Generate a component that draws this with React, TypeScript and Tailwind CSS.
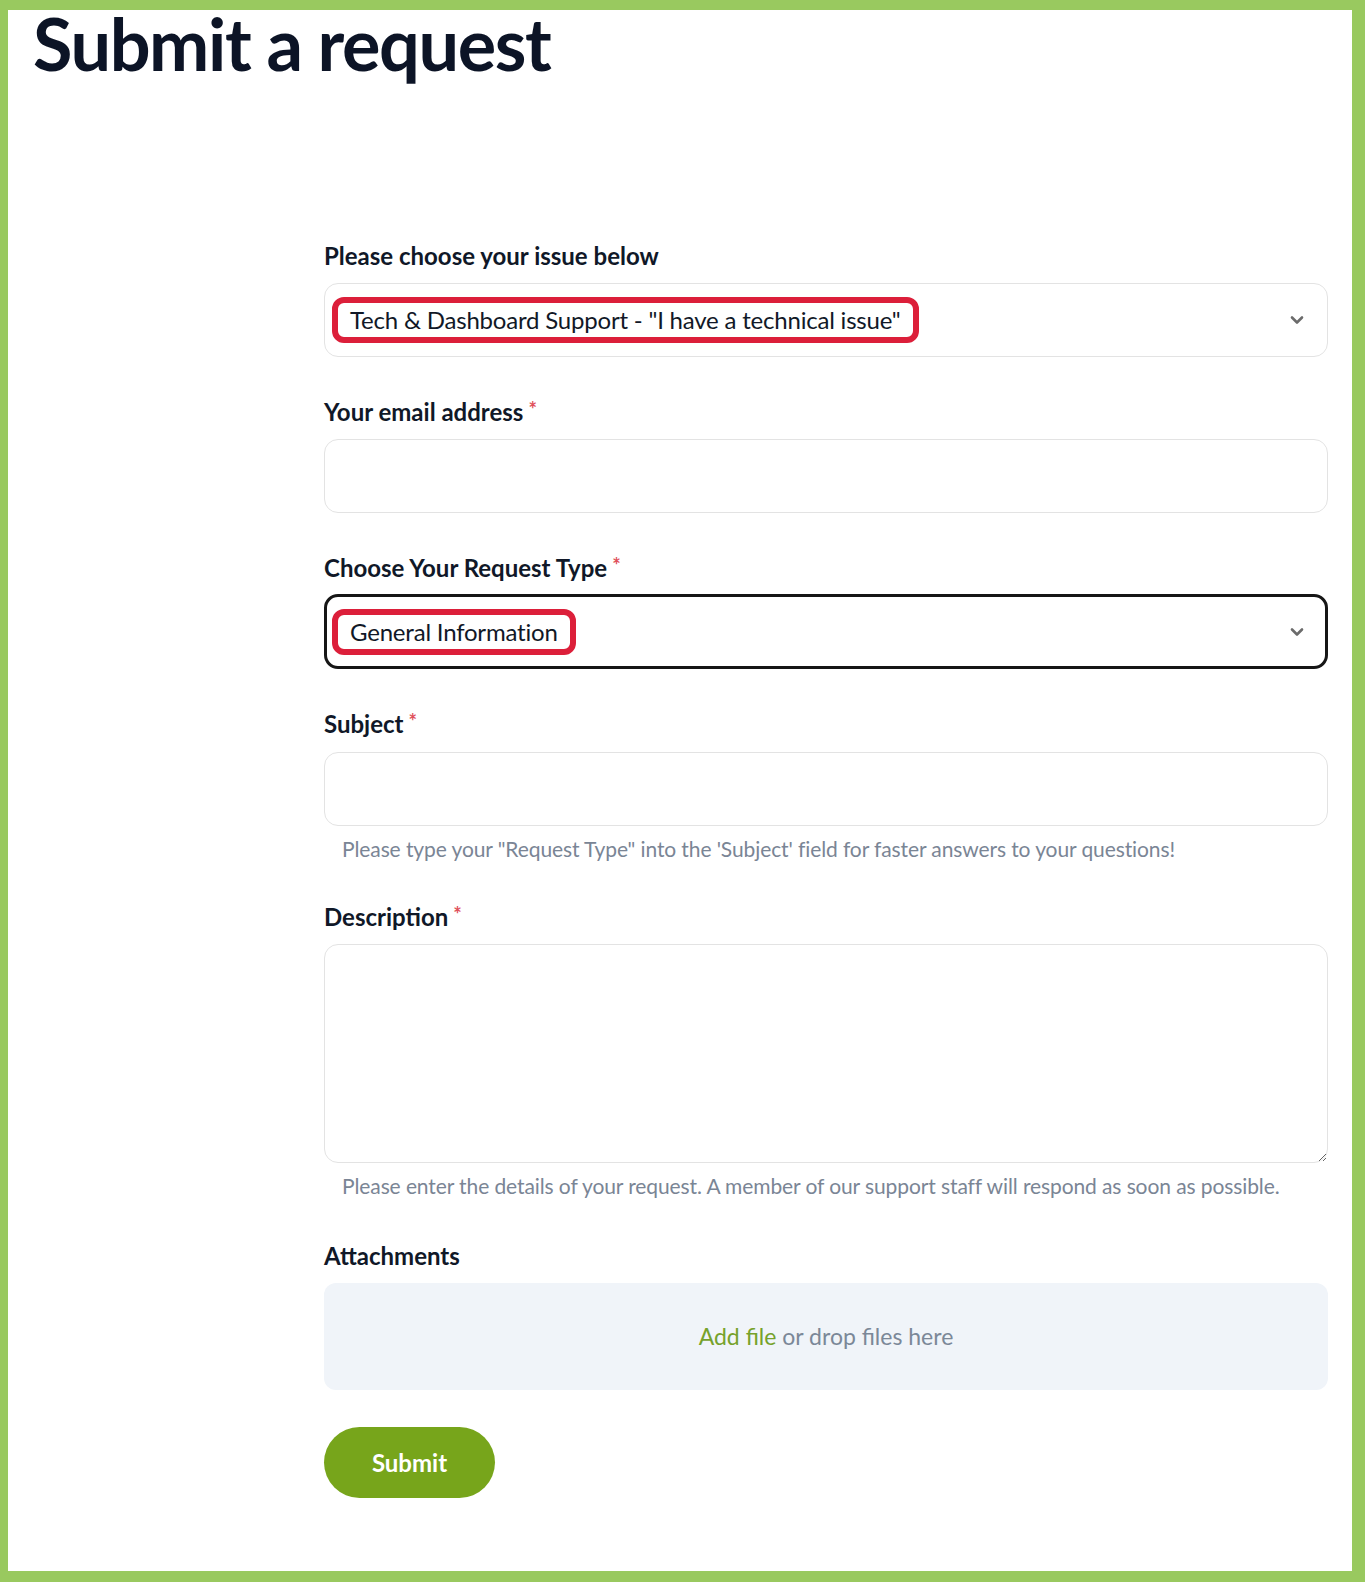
import React from 'react';

const LATO = "font-['Lato','Liberation_Sans',sans-serif]";

function Asterisk() {
  return <span className="relative top-[1px] ml-[5px] align-top text-[20px] leading-none text-[#e0505a]">*</span>;
}

function Label({ children, required = false }: { children: React.ReactNode; required?: boolean }) {
  return (
    <label className="block text-[24px] font-bold leading-[28px] text-[#101828]">
      {children}
      {required ? <Asterisk /> : null}
    </label>
  );
}

function Chevron() {
  return (
    <svg width="14" height="10" viewBox="0 0 14 10" className="shrink-0" aria-hidden="true">
      <path d="M2 2.5 L7 7.5 L12 2.5" fill="none" stroke="#6b6b6b" strokeWidth="2.6" strokeLinecap="round" strokeLinejoin="round" />
    </svg>
  );
}

/** The red annotation box drawn round the selected value. */
function Marked({ children }: { children: React.ReactNode }) {
  return (
    <span className="inline-block rounded-[12px] border-[6px] border-[#dc1f3a] bg-white px-[12px] text-[24px] leading-[34px] tracking-[-0.2px] text-[#111827]">
      {children}
    </span>
  );
}

function Help({ children }: { children: React.ReactNode }) {
  return <p className="mt-[9px] pl-[18px] text-[21px] leading-[28px] tracking-[-0.1px] text-[#7a8595]">{children}</p>;
}

export default function App() {
  return (
    <div className={`${LATO} min-h-[1582px] w-full bg-[#99c95f] pb-[11px] pl-[8px] pr-[13px] pt-[10px]`}>
      <div className="h-[1561px] bg-white">
        <h1 className="ml-[25px] pt-[5px] text-[72px] font-bold leading-[56px] tracking-[-1.4px] text-[#0c1426]">
          Submit a request
        </h1>

        <form className="ml-[316px] mr-[24px] mt-[171px]" onSubmit={(e) => e.preventDefault()}>
          <div>
            <Label>Please choose your issue below</Label>
            <div className="mt-[13px] flex h-[74px] items-center justify-between rounded-[14px] border border-[#e3e3e3] pl-[7px] pr-[23px]">
              <Marked>Tech &amp; Dashboard Support - "I have a technical issue"</Marked>
              <Chevron />
            </div>
          </div>

          <div className="mt-[41px]">
            <Label required>Your email address</Label>
            <input type="email" className="mt-[13px] block h-[74px] w-full rounded-[14px] border border-[#e3e3e3] outline-none" />
          </div>

          <div className="mt-[41px]">
            <Label required>Choose Your Request Type</Label>
            <div className="mt-[12px] flex h-[75px] items-center justify-between rounded-[14px] border-[3px] border-[#161616] pl-[5px] pr-[21px]">
              <Marked>General Information</Marked>
              <Chevron />
            </div>
          </div>

          <div className="mt-[41px]">
            <Label required>Subject</Label>
            <input type="text" className="mt-[14px] block h-[74px] w-full rounded-[14px] border border-[#e3e3e3] outline-none" />
            <Help>Please type your "Request Type" into the 'Subject' field for faster answers to your questions!</Help>
          </div>

          <div className="mt-[40px]">
            <Label required>Description</Label>
            <textarea className="mt-[13px] block h-[219px] w-full resize-y rounded-[14px] border border-[#e3e3e3] outline-none" />
            <Help>Please enter the details of your request. A member of our support staff will respond as soon as possible.</Help>
          </div>

          <div className="mt-[42px]">
            <Label>Attachments</Label>
            <div className="mt-[13px] flex h-[107px] items-center justify-center rounded-[12px] bg-[#f0f4f9] text-[23px] text-[#7b8898]">
              <span>
                <a href="#" className="text-[#76a22b]">Add file</a> or drop files here
              </span>
            </div>
          </div>

          <button
            type="submit"
            className="mt-[37px] h-[71px] w-[171px] rounded-full bg-[#77a51b] text-[24px] font-bold text-white"
          >
            Submit
          </button>
        </form>
      </div>
    </div>
  );
}
